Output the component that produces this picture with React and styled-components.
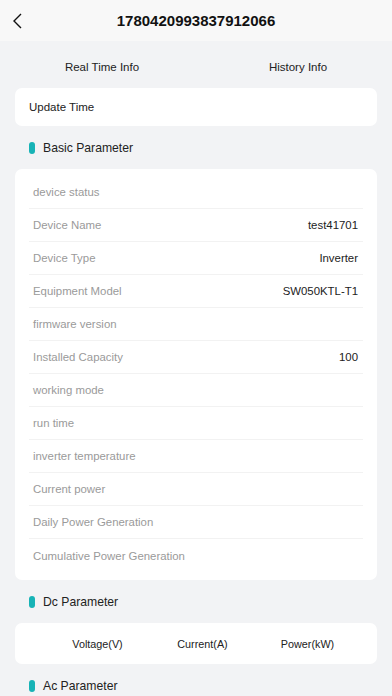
import React from 'react'
import styled, { createGlobalStyle } from 'styled-components'

const GlobalStyle = createGlobalStyle`
    html, body {
        margin: 0;
        padding: 0;
        background: #f2f3f5;
        font-family: "Liberation Sans", Arial, sans-serif;
    }
`

const Page = styled.div`
    width: 392px;
    height: 696px;
    overflow: hidden;
    background: #f2f3f5;
`

const Header = styled.div`
    height: 41px;
    background: #f8f8f8;
    display: flex;
    align-items: center;
    justify-content: center;
    position: relative;
`

const BackButton = styled.div`
    position: absolute;
    left: 10px;
    top: 12px;
    width: 16px;
    height: 18px;
    display: flex;
`

const Title = styled.h1`
    margin: 0;
    font-size: 15px;
    font-weight: 700;
    color: #111;
`

const Tabs = styled.div`
    display: grid;
    grid-template-columns: 1fr 1fr;
    height: 47px;
    align-items: center;
    padding-top: 5px;
    box-sizing: border-box;
`

const Tab = styled.div`
    text-align: center;
    font-size: 11.5px;
    color: #222;
    transform: translateX(${p => p.$shift}px);
`

const Card = styled.div`
    margin: 0 15px;
    background: #fff;
    border-radius: 7px;
`

const UpdateCard = styled(Card)`
    height: 38px;
    display: flex;
    align-items: center;
    padding: 0 14px;
    font-size: 11.5px;
    color: #222;
`

const SectionTitle = styled.div`
    display: flex;
    align-items: center;
    height: 43px;
    padding-left: 29px;
    font-size: 12.2px;
    color: #222;
    gap: 8px;

    &::before {
        content: "";
        width: 6px;
        height: 12px;
        border-radius: 3px;
        background: #17b3b6;
    }
`

const ParamList = styled(Card)`
    padding: 7px 14px 8px;
`

const ParamRow = styled.div`
    display: flex;
    justify-content: space-between;
    align-items: center;
    height: 33px;
    padding: 0 5px 0 4px;
    font-size: 11.4px;
    border-bottom: ${p => (p.$last ? 'none' : '1px solid #f2f2f2')};
    box-sizing: border-box;
`

const ParamLabel = styled.span`
    color: #9a9a9a;
`

const ParamValue = styled.span`
    color: #222;
`

const DcCard = styled(Card)`
    height: 41px;
    display: grid;
    grid-template-columns: repeat(3, 1fr);
    align-items: center;
    padding: 0 17px 0 30px;
`

const DcHead = styled.div`
    text-align: center;
    font-size: 10.8px;
    color: #222;
`

const basicParams = [
    ['device status', ''],
    ['Device Name', 'test41701'],
    ['Device Type', 'Inverter'],
    ['Equipment Model', 'SW050KTL-T1'],
    ['firmware version', ''],
    ['Installed Capacity', '100'],
    ['working mode', ''],
    ['run time', ''],
    ['inverter temperature', ''],
    ['Current power', ''],
    ['Daily Power Generation', ''],
    ['Cumulative Power Generation', ''],
]

export default function App() {
    return (
        <Page>
            <GlobalStyle />
            <Header>
                <BackButton>
                    <svg width="16" height="18" viewBox="0 0 16 18">
                        <path d="M11 2 L4 9 L11 16" fill="none" stroke="#111" strokeWidth="1.4" />
                    </svg>
                </BackButton>
                <Title>1780420993837912066</Title>
            </Header>

            <Tabs>
                <Tab $shift={4}>Real Time Info</Tab>
                <Tab $shift={4}>History Info</Tab>
            </Tabs>

            <UpdateCard>Update Time</UpdateCard>

            <SectionTitle>Basic Parameter</SectionTitle>
            <ParamList>
                {basicParams.map(([label, value], i) => (
                    <ParamRow key={label} $last={i === basicParams.length - 1}>
                        <ParamLabel>{label}</ParamLabel>
                        <ParamValue>{value}</ParamValue>
                    </ParamRow>
                ))}
            </ParamList>

            <SectionTitle>Dc Parameter</SectionTitle>
            <DcCard>
                <DcHead>Voltage(V)</DcHead>
                <DcHead>Current(A)</DcHead>
                <DcHead>Power(kW)</DcHead>
            </DcCard>

            <SectionTitle>Ac Parameter</SectionTitle>
        </Page>
    )
}
